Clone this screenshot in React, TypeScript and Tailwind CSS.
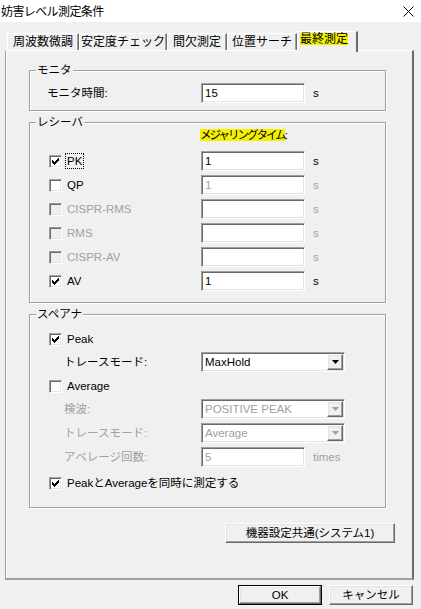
import React from 'react';

// Win32 クラシック風の枠線
const sunken =
  'border border-t-[#a0a0a0] border-l-[#a0a0a0] border-b-white border-r-white shadow-[inset_1px_1px_0_#696969,inset_-1px_-1px_0_#e3e3e3]';
const raised =
  'border border-t-white border-l-white border-b-[#696969] border-r-[#696969] shadow-[inset_-1px_-1px_0_#a0a0a0,inset_1px_1px_0_#e3e3e3]';

const checkPixels = [
  '......X',
  '.....XX',
  'X...XXX',
  'XX.XXX.',
  'XXXXX..',
  '.XXX...',
  '..X....',
];

function Check({ checked = false, disabled = false }: { checked?: boolean; disabled?: boolean }) {
  return (
    <span
      className={`flex h-[13px] w-[13px] shrink-0 items-center justify-center ${sunken} ${
        disabled ? 'bg-[#f0f0f0]' : 'bg-white'
      }`}
    >
      {checked && (
        <svg width="7" height="7" viewBox="0 0 7 7" shapeRendering="crispEdges">
          {checkPixels.map((row, y) =>
            row.split('').map((c, x) =>
              c === 'X' ? <rect key={`${x}-${y}`} x={x} y={y} width="1" height="1" fill="#000" /> : null
            )
          )}
        </svg>
      )}
    </span>
  );
}

function Field({ value = '', disabled = false }: { value?: string; disabled?: boolean }) {
  return (
    <div
      className={`flex h-[20px] w-[104px] shrink-0 items-center bg-white pl-[3px] ${sunken} ${
        disabled ? 'text-[#a0a0a0]' : 'text-black'
      }`}
    >
      {value}
    </div>
  );
}

function Combo({ value, disabled = false }: { value: string; disabled?: boolean }) {
  return (
    <div className={`flex h-[20px] w-[144px] shrink-0 items-center bg-white ${sunken}`}>
      <span className={`flex-1 pl-[3px] ${disabled ? 'text-[#a0a0a0]' : 'text-black'}`}>{value}</span>
      <span className={`mr-[1px] flex h-[16px] w-[16px] items-center justify-center bg-[#f0f0f0] ${raised}`}>
        <svg width="7" height="4" viewBox="0 0 7 4">
          <path d="M0 0h7L3.5 4z" fill={disabled ? '#a0a0a0' : '#000'} />
        </svg>
      </span>
    </div>
  );
}

function Group({ title, className = '', children }: { title: string; className?: string; children: React.ReactNode }) {
  return (
    <div
      className={`relative ml-[23px] w-[357px] shrink-0 border border-[#a0a0a0] shadow-[1px_1px_0_#fff,inset_1px_1px_0_#fff] ${className}`}
    >
      <span className="absolute left-[6px] top-[-8px] bg-[#f0f0f0] px-[1px] leading-[14px]">{title}</span>
      {children}
    </div>
  );
}

const receiverRows = [
  { label: 'PK', checked: true, value: '1', focus: true },
  { label: 'QP', value: '1', fieldDisabled: true },
  { label: 'CISPR-RMS', disabled: true, fieldDisabled: true },
  { label: 'RMS', disabled: true, fieldDisabled: true },
  { label: 'CISPR-AV', disabled: true, fieldDisabled: true },
  { label: 'AV', checked: true, value: '1' },
];

const tabs = [
  { label: '周波数微調', w: 'w-[72px]' },
  { label: '安定度チェック', w: 'w-[88px]' },
  { label: '間欠測定', w: 'w-[60px]' },
  { label: '位置サーチ', w: 'w-[70px]' },
];

export default function App() {
  return (
    <div className="flex h-[609px] w-[421px] flex-col overflow-hidden bg-[#f0f0f0] font-['Liberation_Sans','Noto_Sans_CJK_JP',sans-serif] text-[11.5px] leading-[14px] text-black">
      {/* タイトルバー */}
      <div className="flex h-[22px] shrink-0 items-center justify-between bg-white">
        <span className="pl-[1px] font-['Noto_Sans_CJK_JP',sans-serif] text-[12px] tracking-[-0.6px]">妨害レベル測定条件</span>
        <svg width="11" height="11" viewBox="0 0 11 11" className="mr-[7px]">
          <path d="M0.5 0.5L10.5 10.5M10.5 0.5L0.5 10.5" stroke="#000" strokeWidth="1" />
        </svg>
      </div>

      {/* タブ */}
      <div className="relative z-10 flex h-[28px] shrink-0 pl-[7px] text-[12px]">
        {tabs.map((t) => (
          <div
            key={t.label}
            className={`mt-[11px] flex h-[17px] ${t.w} items-center justify-center whitespace-nowrap border-l border-t border-white border-r border-r-[#696969] shadow-[inset_-1px_0_0_#a0a0a0]`}
          >
            {t.label}
          </div>
        ))}
        <div className="mt-[9px] h-[21px] w-[61px] border-l border-t border-white border-r-2 border-r-[#696969] bg-[#f0f0f0] pl-[2px]">
          <span className="inline-block bg-[#f4f000] leading-[12px]">最終測定</span>
        </div>
      </div>

      {/* タブページ */}
      <div className="ml-[5px] flex h-[530px] w-[409px] shrink-0 flex-col border-l border-t border-l-[#a0a0a0] border-t-white border-b-2 border-r-2 border-b-[#a0a0a0] border-r-[#696969] shadow-[inset_1px_0_0_#fff]">
        <Group title="モニタ" className="mt-[19px] pb-[7px] pt-[12px]">
          <div className="flex h-[20px] items-center">
            <span className="w-[171px] pl-[17px]">モニタ時間:</span>
            <Field value="15" />
            <span className="ml-[8px]">s</span>
          </div>
        </Group>

        <Group title="レシーバ" className="mt-[11px] pb-[11px] pt-[5px]">
          <div className="h-[14px] pl-[170px]">
            <span className="bg-[#f4f000] tracking-[-2px]">メジャリングタイム</span>:
          </div>
          <div className="mt-[9px] flex flex-col gap-[4px]">
            {receiverRows.map((r) => (
              <div key={r.label} className="flex h-[20px] items-center">
                <div className="flex w-[171px] items-center gap-[4px] pl-[19px]">
                  <Check checked={r.checked} disabled={r.disabled} />
                  <span
                    className={`px-[1px] ${r.disabled ? 'text-[#a0a0a0]' : ''} ${
                      r.focus ? 'outline outline-1 outline-dotted outline-black' : ''
                    }`}
                  >
                    {r.label}
                  </span>
                </div>
                <Field value={r.value} disabled={r.fieldDisabled} />
                <span className={`ml-[8px] ${r.fieldDisabled ? 'text-[#a0a0a0]' : ''}`}>s</span>
              </div>
            ))}
          </div>
        </Group>

        <Group title="スペアナ" className="mt-[11px] pb-[14px] pt-[14px]">
          <div className="flex h-[20px] items-center gap-[5px] pl-[19px]">
            <Check checked />
            <span>Peak</span>
          </div>
          <div className="mt-[3px] flex h-[20px] items-center">
            <span className="w-[171px] pl-[34px]">トレースモード:</span>
            <Combo value="MaxHold" />
          </div>
          <div className="mt-[4px] flex h-[20px] items-center gap-[5px] pl-[19px]">
            <Check />
            <span>Average</span>
          </div>
          <div className="mt-[3px] flex h-[20px] items-center text-[#a0a0a0]">
            <span className="w-[171px] pl-[34px]">検波:</span>
            <Combo value="POSITIVE PEAK" disabled />
          </div>
          <div className="mt-[4px] flex h-[20px] items-center text-[#a0a0a0]">
            <span className="w-[171px] pl-[34px]">トレースモード:</span>
            <Combo value="Average" disabled />
          </div>
          <div className="mt-[4px] flex h-[20px] items-center text-[#a0a0a0]">
            <span className="w-[171px] pl-[34px]">アベレージ回数:</span>
            <Field value="5" disabled />
            <span className="ml-[8px]">times</span>
          </div>
          <div className="mt-[6px] flex h-[20px] items-center gap-[5px] pl-[19px]">
            <Check checked />
            <span>PeakとAverageを同時に測定する</span>
          </div>
        </Group>

        <button
          className={`ml-[219px] mt-[15px] flex h-[20px] w-[170px] shrink-0 items-center justify-center bg-[#f0f0f0] ${raised}`}
        >
          機器設定共通(システム1)
        </button>
      </div>

      {/* OK / キャンセル */}
      <div className="mt-[5px] flex shrink-0 justify-end gap-[7px] pr-[8px]">
        <div className="h-[20px] w-[84px] border border-black">
          <button className={`flex h-full w-full items-center justify-center bg-[#f0f0f0] ${raised}`}>OK</button>
        </div>
        <button className={`flex h-[20px] w-[84px] items-center justify-center bg-[#f0f0f0] ${raised}`}>
          キャンセル
        </button>
      </div>
    </div>
  );
}
